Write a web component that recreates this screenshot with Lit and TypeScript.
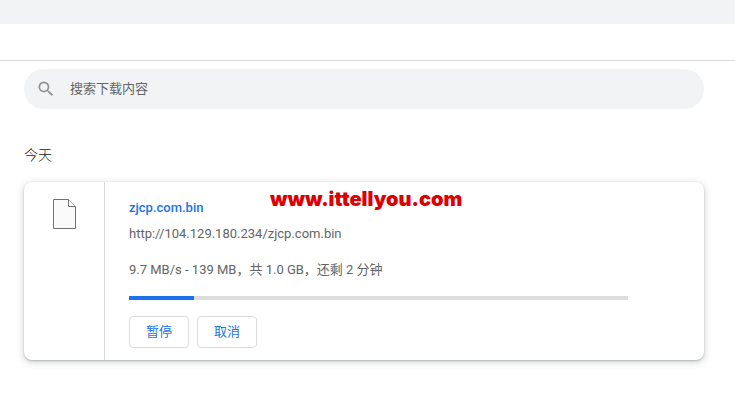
import { LitElement, css, html } from "lit";
import { customElement, property } from "lit/decorators.js";

@customElement("download-item")
class DownloadItem extends LitElement {
  @property() name = "";
  @property() url = "";
  @property() status = "";
  @property({ type: Number }) percent = 0;

  static styles = css`
    :host {
      display: flex;
      position: relative;
      background: #fff;
      border-radius: 8px;
      box-shadow: 0 1px 2px rgba(60, 64, 67, 0.3), 0 2px 6px 2px rgba(60, 64, 67, 0.15);
      color: #646464;
    }
    .icon {
      flex: none;
      width: 80px;
      padding-top: 16px;
      border-right: 1px solid #d5d6d8;
      text-align: center;
    }
    .icon svg {
      display: block;
      margin: 0 auto;
    }
    .content {
      flex: 1;
      display: flex;
      flex-direction: column;
      align-items: flex-start;
      min-width: 0;
      padding: 16px 76px 12px 24px;
    }
    .name {
      color: #1a73e8;
      font-weight: 500;
      text-decoration: none;
    }
    .url {
      margin-top: 6px;
      color: inherit;
      text-decoration: none;
    }
    .status {
      margin-top: 16px;
    }
    progress {
      appearance: none;
      display: block;
      width: 100%;
      height: 4px;
      margin-top: 16px;
      border: none;
      background: #ddd;
    }
    progress::-webkit-progress-bar {
      background: #ddd;
    }
    progress::-webkit-progress-value {
      background: #1a73e8;
    }
    .actions {
      display: flex;
      gap: 8px;
      margin-top: 16px;
    }
    button {
      height: 32px;
      min-width: 60px;
      padding: 0 16px;
      border: 1px solid #dadce0;
      border-radius: 4px;
      background: #fff;
      color: #1a73e8;
      font: inherit;
    }
    .watermark {
      position: absolute;
      top: 5px;
      left: 246px;
      color: #dc0000;
      font: 900 20px/24px Inter, sans-serif;
    }
  `;

  render() {
    return html`
      <div class="icon">
        <svg width="24" height="32" viewBox="0 0 24 32" fill="#fafafa" stroke="#70706e">
          <path d="M1.5 1.5H16.5L23.5 8.5V30.5H1.5Z" />
          <path d="M16.5 1.5V8.5H23.5" />
        </svg>
      </div>
      <div class="content">
        <a class="name" href="#">${this.name}</a>
        <a class="url" href="#">${this.url}</a>
        <div class="status">${this.status}</div>
        <progress aria-label=${this.name} max="100" .value=${this.percent}></progress>
        <div class="actions">
          <button type="button">暂停</button>
          <button type="button">取消</button>
        </div>
      </div>
      <div class="watermark">www.ittellyou.com</div>
    `;
  }
}

@customElement("app-root")
class AppRoot extends LitElement {
  static styles = css`
    :host {
      display: block;
      font: 13px/20px Roboto, "Noto Sans CJK SC", sans-serif;
    }
    .tabs {
      height: 24px;
      background: #f1f3f4;
    }
    .toolbar {
      height: 36px;
      border-bottom: 1px solid #d9dadc;
    }
    main {
      max-width: 680px;
      padding: 8px 24px 24px;
    }
    .search {
      display: flex;
      align-items: center;
      gap: 14px;
      height: 40px;
      padding: 0 12px;
      border-radius: 20px;
      background: #f1f3f4;
    }
    .search svg {
      flex: none;
    }
    input {
      flex: 1;
      min-width: 0;
      padding: 0;
      border: none;
      outline: none;
      background: none;
      color: #646464;
      font: inherit;
    }
    input::placeholder {
      color: #646464;
      opacity: 1;
    }
    h2 {
      margin: 36px 0 17px;
      color: #202124;
      font-size: 14px;
      font-weight: 300;
      line-height: 20px;
    }
  `;

  render() {
    return html`
      <div class="tabs"></div>
      <div class="toolbar"></div>
      <main>
        <label class="search">
          <svg width="20" height="20" viewBox="0 0 24 24" fill="#8f9193">
            <path
              d="M15.5 14h-.79l-.28-.27A6.471 6.471 0 0 0 16 9.5 6.5 6.5 0 1 0 9.5 16c1.61 0 3.09-.59 4.23-1.57l.27.28v.79l5 4.99L20.49 19l-4.99-5zm-6 0C7.01 14 5 11.99 5 9.5S7.01 5 9.5 5 14 7.01 14 9.5 11.99 14 9.5 14z"
            />
          </svg>
          <input type="text" aria-label="搜索下载内容" placeholder="搜索下载内容" />
        </label>
        <h2>今天</h2>
        <download-item
          name="zjcp.com.bin"
          url="http://104.129.180.234/zjcp.com.bin"
          status="9.7 MB/s - 139 MB，共 1.0 GB，还剩 2 分钟"
          percent="13"
        ></download-item>
      </main>
    `;
  }
}
